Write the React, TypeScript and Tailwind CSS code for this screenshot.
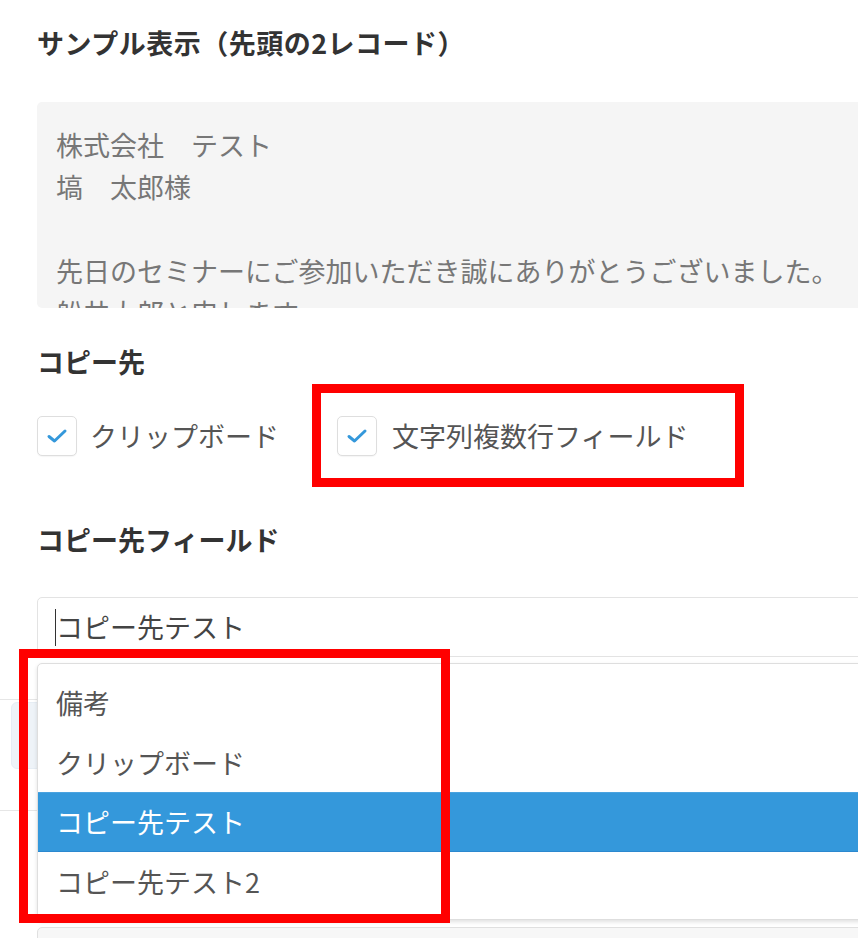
import React from "react";

const font = { fontFamily: '"Noto Sans CJK JP", "Noto Sans", sans-serif' };

function Check() {
  return (
    <div className="flex h-[40px] w-[40px] shrink-0 items-center justify-center rounded-[5px] border border-[#dedede] bg-white shadow-[0_1px_1px_rgba(0,0,0,0.04)]">
      <svg width="22" height="16" viewBox="0 0 22 16" fill="none">
        <path d="M3 8.5 L8.5 13 L19 3" stroke="#3498db" strokeWidth="3" strokeLinecap="round" strokeLinejoin="round" />
      </svg>
    </div>
  );
}

export default function App() {
  return (
    <div
      className="relative h-[938px] w-[858px] overflow-hidden bg-white text-[27px] leading-[40px] text-[#333]"
      style={font}
    >
      <div className="flex flex-col">
        <div className="ml-[37px] mt-[23px] font-bold tracking-[0.5px] text-[#333]">サンプル表示（先頭の2レコード）</div>

        <div className="ml-[37px] mt-[39px] h-[206px] w-[900px] overflow-hidden rounded-[5px] bg-[#f5f5f5] pl-[19px] pt-[22px] text-[#777] leading-[42px]">
          <div>株式会社　テスト</div>
          <div>塙　太郎様</div>
          <div className="h-[42px]" />
          <div className="whitespace-nowrap">先日のセミナーにご参加いただき誠にありがとうございました。</div>
          <div>船井太郎と申します。</div>
        </div>

        <div className="ml-[37px] mt-[34px] font-bold">コピー先</div>

        <div className="ml-[37px] mt-[34px] flex h-[40px] items-center">
          <Check />
          <span className="ml-[13px] text-[#555]">クリップボード</span>
          <div className="ml-[58px]">
            <Check />
          </div>
          <span className="ml-[15px] text-[#555]">文字列複数行フィールド</span>
        </div>

        <div className="ml-[37px] mt-[64px] font-bold">コピー先フィールド</div>

        <div className="relative ml-[37px] mt-[37px]">
          <div className="flex h-[60px] w-[900px] items-center rounded-[5px] border border-[#e3e3e3] bg-white pl-[17px] text-[#444]">
            <span className="mr-[-1px] inline-block h-[37px] w-px bg-[#333]" />
            <span className="pl-[1px]">コピー先テスト</span>
          </div>

          <div className="absolute left-0 top-[66px] z-10 w-[900px] rounded-[5px] border border-[#dedede] bg-white pb-[7px] pt-[9px] shadow-[0_2px_4px_rgba(0,0,0,0.12)]">
            <div className="flex h-[60px] items-center pl-[18px] text-[#555]">備考</div>
            <div className="flex h-[59px] items-center pl-[18px] text-[#555]">クリップボード</div>
            <div className="flex h-[60px] items-center border-b border-t border-b-[#2b88cf] border-t-[#4aa3e0] bg-[#3498db] pl-[18px] text-white">コピー先テスト</div>
            <div className="flex h-[60px] items-center pl-[18px] text-[#555]">コピー先テスト2</div>
          </div>
        </div>

        <div className="mt-[42px] w-[900px] border-t border-[#e6e6e6]" />
        <div className="ml-[11px] mt-[2px] h-[67px] w-[400px] rounded-[6px] border border-[#e6edf4] bg-[#eef3f8]" />
        <div className="mt-[41px] w-[900px] border-t border-[#e6e6e6]" />
        <div className="ml-[37px] mt-[116px] h-[40px] w-[900px] rounded-t-[5px] border border-[#e0e0e0] bg-[#f7f7f7]" />
      </div>

      <div className="pointer-events-none absolute left-[312px] top-[384px] z-20 h-[103px] w-[432px] border-[9px] border-[#ff0000]" />
      <div className="pointer-events-none absolute left-[19px] top-[649px] z-20 h-[274px] w-[431px] border-[9px] border-[#ff0000]" />
    </div>
  );
}
